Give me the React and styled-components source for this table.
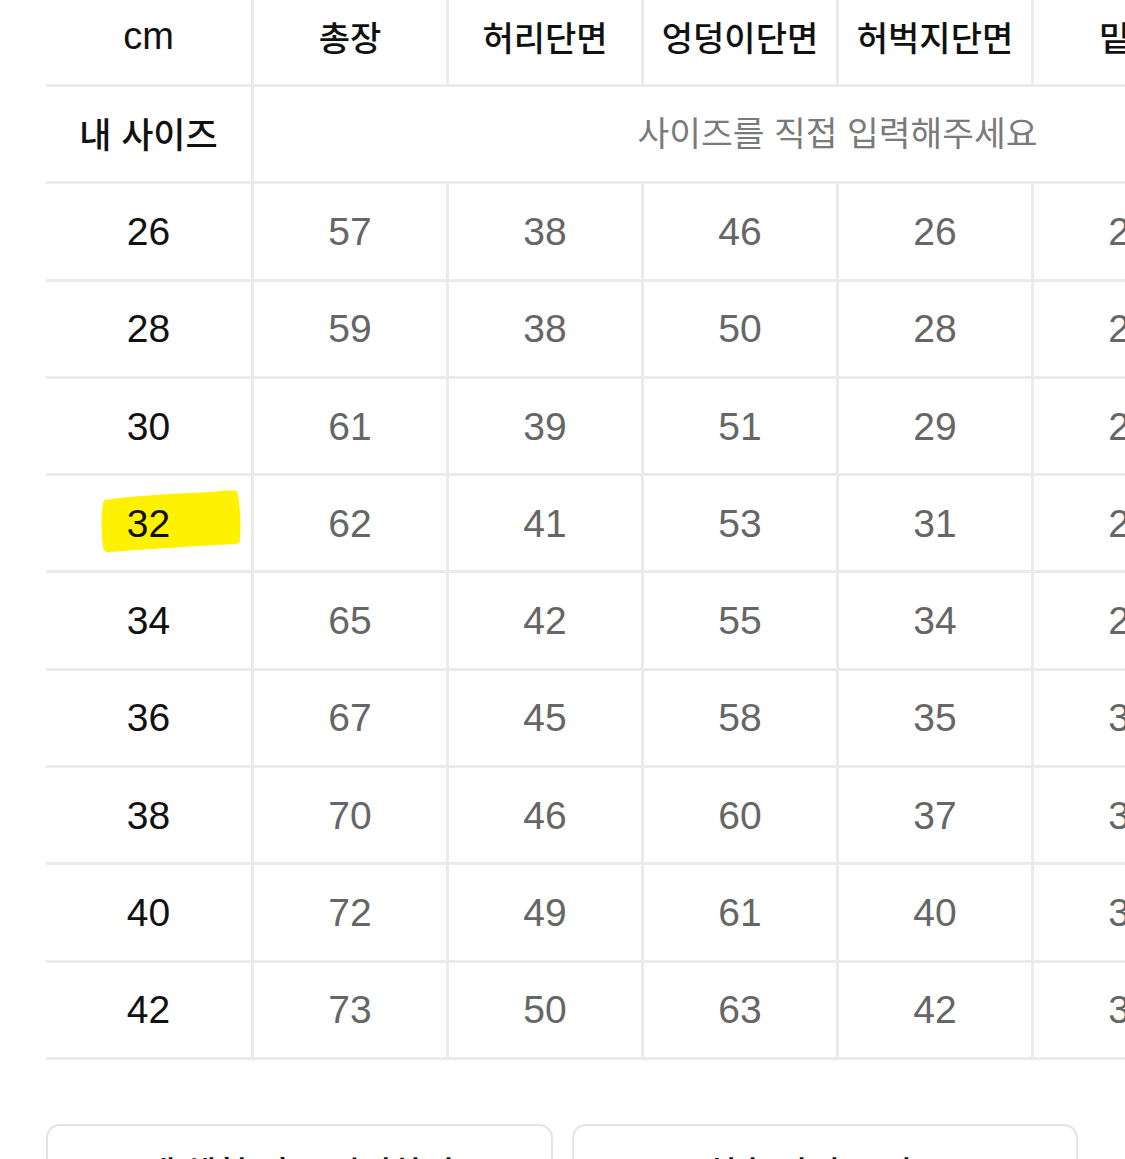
import React from "react";
import styled, { createGlobalStyle } from "styled-components";

const GlobalStyle = createGlobalStyle`
  html, body {
    margin: 0;
    padding: 0;
    background: #ffffff;
    overflow: hidden;
  }
  body {
    font-family: "Liberation Sans", "Noto Sans CJK KR", sans-serif;
    -webkit-font-smoothing: antialiased;
  }
`;

const LINE = "#ebebeb";

const Page = styled.div`
  width: 1125px;
  height: 1159px;
  overflow: hidden;
  padding-left: 46px;
  box-sizing: border-box;
`;

const Table = styled.div`
  display: grid;
  grid-template-columns: 208px repeat(6, 195px);
  width: max-content;
`;

const HeadCell = styled.div`
  height: 87px;
  box-sizing: border-box;
  border-bottom: 3px solid ${LINE};
  border-right: 3px solid ${LINE};
  display: flex;
  align-items: center;
  justify-content: center;
  padding-bottom: 12px;
  font-size: ${(p) => (p.$latin ? "38px" : "34px")};
  font-weight: ${(p) => (p.$latin ? 400 : 500)};
  color: #111;
  white-space: nowrap;
`;

const RowCell = styled.div`
  position: relative;
  height: 97.3px;
  box-sizing: border-box;
  border-bottom: 3px solid ${LINE};
  border-right: 3px solid ${LINE};
  display: flex;
  align-items: center;
  justify-content: center;
  padding-top: ${(p) => (p.$lift ? "0" : "1px")};
  padding-bottom: ${(p) => (p.$lift ? "4px" : "0")};
  white-space: nowrap;
`;

const LabelText = styled.span`
  position: relative;
  z-index: 1;
  font-size: 35px;
  font-weight: 500;
  color: #111;
`;

const SizeText = styled.span`
  position: relative;
  z-index: 1;
  font-size: 39px;
  color: #111;
`;

const ValueText = styled.span`
  font-size: 39px;
  color: #666;
`;

const InputCell = styled(RowCell)`
  grid-column: span 6;
  padding-bottom: 8px;
`;

const Placeholder = styled.span`
  font-size: 34.5px;
  color: #7a7a7a;
`;

const Marker = styled.svg`
  position: absolute;
  left: 53px;
  top: 14px;
  width: 144px;
  height: 64px;
  z-index: 0;
`;

const Buttons = styled.div`
  display: flex;
  gap: 19px;
  width: 1032px;
  margin-top: 64px;
`;

const Button = styled.button`
  flex: 1;
  height: 120px;
  box-sizing: border-box;
  border: 2px solid #e4e4e4;
  border-radius: 14px;
  background: #fff;
  display: flex;
  justify-content: center;
  align-items: flex-start;
  padding-top: 21px;
  font-family: "Liberation Sans", "Noto Sans CJK KR", sans-serif;
  font-size: 34px;
  font-weight: 500;
  color: #111;
`;

const headers = ["총장", "허리단면", "엉덩이단면", "허벅지단면", "밑위", "밑단단면"];

const rows = [
  ["26", 57, 38, 46, 26, 25, 17],
  ["28", 59, 38, 50, 28, 26, 18],
  ["30", 61, 39, 51, 29, 27, 18],
  ["32", 62, 41, 53, 31, 28, 19],
  ["34", 65, 42, 55, 34, 29, 20],
  ["36", 67, 45, 58, 35, 30, 21],
  ["38", 70, 46, 60, 37, 31, 21],
  ["40", 72, 49, 61, 40, 32, 22],
  ["42", 73, 50, 63, 42, 33, 23],
];

function Highlight() {
  return (
    <Marker viewBox="0 0 144 64" aria-hidden="true">
      <path
        d="M6 10 C 30 6, 70 4, 110 2 C 122 1, 132 0, 138 1 C 141 12, 142 30, 141 50 C 141 53, 139 54, 134 54 C 100 56, 50 59, 10 62 C 6 62, 4 60, 4 56 C 2 42, 2 26, 4 14 C 4 11, 5 10, 6 10 Z"
        fill="#fff200"
      />
    </Marker>
  );
}

export default function App() {
  return (
    <>
      <GlobalStyle />
      <Page>
        <Table>
          <HeadCell $latin>cm</HeadCell>
          {headers.map((h) => (
            <HeadCell key={h}>{h}</HeadCell>
          ))}

          <RowCell $lift>
            <LabelText>내 사이즈</LabelText>
          </RowCell>
          <InputCell>
            <Placeholder>사이즈를 직접 입력해주세요</Placeholder>
          </InputCell>

          {rows.map(([size, ...vals]) => (
            <React.Fragment key={size}>
              <RowCell>
                {size === "32" && <Highlight />}
                <SizeText>{size}</SizeText>
              </RowCell>
              {vals.map((v, i) => (
                <RowCell key={i}>
                  <ValueText>{v}</ValueText>
                </RowCell>
              ))}
            </React.Fragment>
          ))}
        </Table>
        <Buttons>
          <Button>내 체형 정보 입력하기</Button>
          <Button>실측 사이즈 비교</Button>
        </Buttons>
      </Page>
    </>
  );
}
